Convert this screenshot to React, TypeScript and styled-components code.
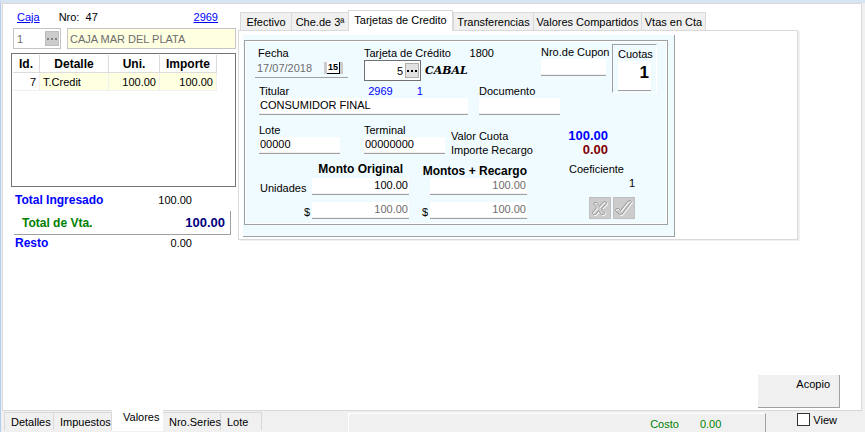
import React from "react";
import styled, { createGlobalStyle, css } from "styled-components";

const GlobalStyle = createGlobalStyle`
  *, *::before, *::after { box-sizing: border-box; }
  body {
    margin: 0;
    background: #f0f0f0;
    color: #000;
    font: 11px/14px "Liberation Sans", Arial, sans-serif;
  }
  button, input { font: inherit; color: inherit; margin: 0; border-radius: 0; }
`;

const line = "#d9d9d9";
const shade = "#a0a0a0";

const Shell = styled.div`
  min-height: 100vh;
  display: flex;
  flex-direction: column;
  background: #f0f0f0;
  border-top: 3px solid #d7e4f2;
  border-left: 1px solid #b4cdee;
`;

const Page = styled.main`
  flex: 1;
  display: flex;
  flex-direction: column;
  margin: 0 3px 0 1px;
  border: 1px solid ${line};
  background: #fff;
`;

const Columns = styled.div`
  display: grid;
  grid-template-columns: 225px minmax(0, 560px);
  column-gap: 2px;
  padding: 6px 8px 0;
`;

const Summary = styled.section`
  display: flex;
  flex-direction: column;
`;

const BoxHead = styled.div`
  display: flex;
  padding: 0 18px 0 6px;
  gap: 19px;
`;

const Link = styled.a<{ $end?: boolean }>`
  color: #00f;
  text-decoration: underline;
  margin-left: ${(p) => (p.$end ? "auto" : "0")};
`;

const BoxLine = styled.div`
  display: flex;
  gap: 6px;
  margin: 4px 0;
  padding-left: 2px;
`;

const CodeBox = styled.div<{ $strong?: boolean }>`
  display: flex;
  align-items: center;
  width: ${(p) => (p.$strong ? "57px" : "48px")};
  height: 21px;
  padding: 1px;
  border: 1px solid ${(p) => (p.$strong ? "#707070" : "#c4c4c4")};
  background: #fff;
  color: ${(p) => (p.$strong ? "#000" : "#6d6d6d")};
`;

const CodeInput = styled.input<{ $right?: boolean }>`
  flex: 1;
  min-width: 0;
  height: 17px;
  padding: 0 2px;
  border: 0;
  background: transparent;
  text-align: ${(p) => (p.$right ? "right" : "left")};
`;

const DotsButton = styled.button<{ $off?: boolean }>`
  display: flex;
  align-items: center;
  justify-content: center;
  width: 14px;
  height: 15px;
  padding: 0;
  border: 1px solid ${(p) => (p.$off ? "#bdbdbd" : "#adadad")};
  background: ${(p) => (p.$off ? "#cccccc" : "#e1e1e1")};
  color: ${(p) => (p.$off ? "#808080" : "#000")};
`;

const NameInput = styled.input`
  flex: 1;
  min-width: 0;
  height: 21px;
  padding: 0 2px;
  border: 1px solid #c4c4c4;
  background: #ffffe1;
  color: #6d6d6d;
`;

const GridBox = styled.div`
  height: 134px;
  padding: 1px;
  border: 1px solid #747474;
`;

const Table = styled.table`
  width: 204px;
  table-layout: fixed;
  border-collapse: separate;
  border-spacing: 0;
`;

const Th = styled.th<{ $w: number }>`
  width: ${(p) => p.$w}px;
  height: 18px;
  padding: 0;
  border-right: 1px solid #dcdcdc;
  border-bottom: 1px solid #dcdcdc;
  font: bold 12px/14px "Liberation Sans", Arial, sans-serif;
`;

const Td = styled.td<{ $plain?: boolean; $left?: boolean }>`
  height: 18px;
  padding: 0 3px;
  border-right: 1px solid #f0f0f0;
  border-bottom: 1px solid #f0f0f0;
  background: ${(p) => (p.$plain ? "#fff" : "#ffffe1")};
  text-align: ${(p) => (p.$left ? "left" : "right")};
`;

const Bold = styled.span<{ $color?: string; $size?: number }>`
  color: ${(p) => p.$color ?? "#000"};
  font: bold ${(p) => p.$size ?? 12}px/14px "Liberation Sans", Arial, sans-serif;
  white-space: nowrap;
`;

const TotalRow = styled.div<{ $panel?: boolean }>`
  display: flex;
  align-items: center;
  justify-content: space-between;
  ${(p) =>
    p.$panel
      ? css`
          height: 24px;
          margin: 0 5px 0 3px;
          padding: 0 5px 0 8px;
          border: solid ${shade};
          border-width: 0 1px 1px 0;
        `
      : css`
          height: 16px;
          padding: 0 44px 0 4px;
        `}
`;

const TotalGap = styled.div<{ $h: number }>`
  height: ${(p) => p.$h}px;
`;

const Tender = styled.section`
  min-width: 0;
`;

const TabList = styled.div`
  display: flex;
  align-items: flex-end;
  padding-left: 2px;
`;

const Tab = styled.button<{ $w: number; $active?: boolean }>`
  width: ${(p) => p.$w}px;
  height: ${(p) => (p.$active ? 21 : 18)}px;
  margin-bottom: ${(p) => (p.$active ? "-1px" : "0")};
  padding: ${(p) => (p.$active ? "0 0 2px" : "0")};
  border: 1px solid ${line};
  border-bottom: 0;
  border-right-width: ${(p) => (p.$active ? 1 : 0)}px;
  background: ${(p) => (p.$active ? "#fff" : "#f0f0f0")};
  white-space: nowrap;
  position: relative;
  &:last-child { border-right-width: 1px; }
`;

const TabPanel = styled.div`
  padding: 4px 4px 2px;
  border: 1px solid ${line};
  box-shadow: 2px 1px 0 #f0f0f0;
`;

const Card = styled.div`
  max-width: 432px;
  padding: 5px 6px 11px 1px;
  border: solid ${shade};
  border-width: 0 1px 1px 0;
  background: #f0fbff;
`;

const Form = styled.form`
  padding: 3px 10px 5px 10px;
  border: 1px solid ${shade};
  box-shadow: inset -1px -1px 0 #fff, inset 1px 1px 0 #fff;
`;

const TopGrid = styled.div`
  display: grid;
  grid-template-columns: 351px 45px;
  column-gap: 6px;
`;

const Row = styled.div<{ $indent?: number; $gap: number; $top?: number; $spread?: boolean }>`
  display: flex;
  align-items: flex-start;
  justify-content: ${(p) => (p.$spread ? "space-between" : "flex-start")};
  gap: ${(p) => p.$gap}px;
  padding-left: ${(p) => p.$indent ?? 0}px;
  margin-top: ${(p) => p.$top ?? 0}px;
`;

const Field = styled.div<{ $w: number; $top?: number }>`
  display: flex;
  flex-direction: column;
  flex: none;
  width: ${(p) => p.$w}px;
  padding-top: ${(p) => p.$top ?? 0}px;
`;

const Caption = styled.div`
  display: flex;
  justify-content: space-between;
  white-space: nowrap;
`;

const Label = styled.label`
  white-space: nowrap;
`;

const Input = styled.input<{ $right?: boolean; $muted?: boolean }>`
  width: 100%;
  height: 17px;
  padding: 0 1px 2px;
  border: 0;
  border-bottom: 1px solid ${shade};
  background: #fff;
  box-shadow: inset 0 -1px 0 #f0f0f0;
  color: ${(p) => (p.$muted ? "#6d6d6d" : "#000")};
  text-align: ${(p) => (p.$right ? "right" : "left")};
`;

const DateBox = styled.div`
  display: flex;
  align-items: center;
  height: 18px;
  padding: 0 5px 2px 0;
  border-bottom: 1px solid ${shade};
  color: #6d6d6d;
`;

const DateButton = styled.button`
  display: flex;
  justify-content: center;
  width: 19px;
  height: 12px;
  padding: 0;
  border: 0;
  background: #ccc;
`;

const Brand = styled.span`
  font: italic bold 11px/14px "DejaVu Serif", serif;
`;

const Ids = styled.span`
  display: flex;
  gap: 24px;
  margin-right: auto;
  margin-left: 79px;
  color: #00f;
`;

const Quotas = styled.div`
  grid-row: span 2;
  display: flex;
  flex-direction: column;
  width: 45px;
  height: 49px;
  padding: 2px 5px 1px;
  border: 1px solid #fff;
  border-top-color: ${shade};
  border-left-color: ${shade};
`;

const QuotaInput = styled.input`
  width: 33px;
  height: 30px;
  padding: 0 2px 5px;
  border: 0;
  border-bottom: 1px solid ${shade};
  background: #fff;
  font: bold 17px/20px "Liberation Sans", Arial, sans-serif;
  text-align: right;
`;

const FeeList = styled.dl`
  display: grid;
  grid-template-columns: 96px 61px;
  margin: 6px 0 0;
`;

const Fee = styled.dt`
  white-space: nowrap;
`;

const FeeValue = styled.dd`
  margin: 0;
  text-align: right;
`;

const Bottom = styled.div`
  display: grid;
  grid-template-columns: 53px 97px 21px 97px 108px;
  grid-template-rows: 16px 24px 17px;
  padding-left: 4px;
  margin-top: 5px;
`;

const Heading = styled.div<{ $wide?: boolean }>`
  grid-column: ${(p) => (p.$wide ? "span 2" : "2")};
  padding: ${(p) => (p.$wide ? "2px 0 0" : "0 6px 0 0")};
  text-align: right;
`;

const Side = styled.div`
  grid-column: 5;
  grid-row: 1 / span 3;
  display: flex;
  flex-direction: column;
  align-items: flex-end;
`;

const Coefficient = styled.span`
  padding-right: 11px;
`;

const Actions = styled.div`
  display: flex;
  gap: 2px;
  margin-top: 7px;
`;

const IconButton = styled.button`
  display: flex;
  align-items: center;
  justify-content: center;
  width: 22px;
  height: 22px;
  padding: 0;
  border: 1px solid #bfbfbf;
  background: #ccc;
`;

const RowLabel = styled.label<{ $end?: boolean }>`
  padding: 3px 2px 0 1px;
  text-align: ${(p) => (p.$end ? "right" : "left")};
`;

const Acopio = styled.button`
  align-self: flex-end;
  display: flex;
  justify-content: flex-end;
  width: 82px;
  height: 33px;
  margin: auto 21px 2px 0;
  padding: 2px 9px 0;
  border: solid ${shade};
  border-width: 0 1px 1px 0;
  background: #f0f0f0;
`;

const Footer = styled.footer`
  display: flex;
  height: 21px;
  padding: 0 28px 0 3px;
`;

const FooterTabs = styled.div`
  display: flex;
  flex: none;
  width: 344px;
`;

const FooterTab = styled.button<{ $w: number; $active?: boolean }>`
  width: ${(p) => p.$w}px;
  height: ${(p) => (p.$active ? 21 : 18)}px;
  margin-top: ${(p) => (p.$active ? "-1px" : "1px")};
  padding: ${(p) => (p.$active ? "0 2px 7px 11px" : "0 2px 0 6px")};
  border: solid ${line};
  border-width: ${(p) => (p.$active ? "0" : "1px 1px 0 0")};
  background: ${(p) => (p.$active ? "#fff" : "#f0f0f0")};
  text-align: left;
  white-space: nowrap;
  &:first-child { border-left-width: 1px; }
`;

const Status = styled.div`
  flex: 1;
  display: flex;
  justify-content: flex-end;
  gap: 21px;
  margin-top: 2px;
  padding: 3px 44px 0 0;
  border-top: 1px solid #fff;
  border-left: 1px solid #fff;
  border-right: 1px solid ${shade};
  color: #008000;
`;

const Check = styled.label`
  display: flex;
  gap: 3px;
  margin: 2px 0 0 31px;
`;

const CheckInput = styled.input`
  appearance: none;
  width: 13px;
  height: 13px;
  border: 1px solid #333;
  background: #fff;
  &:checked { background: #333; }
`;

const Dots = () => (
  <svg width="10" height="2" viewBox="0 0 10 2" fill="currentColor" aria-hidden="true">
    <rect x="0" width="2" height="2" />
    <rect x="4" width="2" height="2" />
    <rect x="8" width="2" height="2" />
  </svg>
);

const CalendarTile = styled.span`
  width: 13px;
  height: 12px;
  border: solid #000;
  border-width: 0 1px 1px 0;
  background: #fff;
  color: #000;
  font: bold 9px/11px "Liberation Sans", Arial, sans-serif;
  text-align: center;
`;

const crossPath = "M2 3l1-1h2l3 4 3-4 2-1 2 1v1l-5 5 3 4v1l-1 1h-2l-3-4-3 4H2l-1-1v-1l4-5-3-4z";
const tickPath = "M1 10l1-1h2l2 2 7-9 3-1 1 1-10 13H5l-4-4z";

const Cross = () => (
  <svg width="18" height="17" viewBox="0 0 18 17" fill="none" aria-hidden="true">
    <path d={crossPath} transform="translate(1.5 1.5)" stroke="#fff" />
    <path d={crossPath} transform="translate(.5 .5)" stroke="#999" />
  </svg>
);

const Tick = () => (
  <svg width="20" height="18" viewBox="0 0 20 18" fill="none" aria-hidden="true">
    <path d={tickPath} transform="translate(1.5 1.5)" stroke="#fff" />
    <path d={tickPath} transform="translate(.5 .5)" stroke="#999" />
  </svg>
);

const tenderTabs = [
  { text: "Efectivo", w: 51 },
  { text: "Che.de 3ª", w: 57 },
  { text: "Tarjetas de Credito", w: 105, active: true },
  { text: "Transferencias", w: 80 },
  { text: "Valores Compartidos", w: 108 },
  { text: "Vtas en Cta", w: 65 },
];

const pageTabs = [
  { text: "Detalles", w: 50 },
  { text: "Impuestos", w: 58 },
  { text: "Valores", w: 51, active: true },
  { text: "Nro.Series", w: 58 },
  { text: "Lote", w: 41 },
];

export default function App() {
  return (
    <>
      <GlobalStyle />
      <Shell>
        <Page>
          <Columns>
            <Summary>
              <BoxHead>
                <Link href="#caja">Caja</Link>
                <span>Nro:&nbsp; 47</span>
                <Link href="#2969" $end>2969</Link>
              </BoxHead>
              <BoxLine>
                <CodeBox>
                  <CodeInput aria-label="Caja" defaultValue="1" />
                  <DotsButton type="button" $off aria-label="Buscar caja"><Dots /></DotsButton>
                </CodeBox>
                <NameInput aria-label="Nombre de caja" defaultValue="CAJA MAR DEL PLATA" readOnly />
              </BoxLine>
              <GridBox>
                <Table>
                  <thead>
                    <tr>
                      <Th $w={27}>Id.</Th>
                      <Th $w={69}>Detalle</Th>
                      <Th $w={51}>Uni.</Th>
                      <Th $w={57}>Importe</Th>
                    </tr>
                  </thead>
                  <tbody>
                    <tr>
                      <Td $plain>7</Td>
                      <Td $left>T.Credit</Td>
                      <Td>100.00</Td>
                      <Td>100.00</Td>
                    </tr>
                  </tbody>
                </Table>
              </GridBox>
              <TotalGap $h={5} />
              <TotalRow>
                <Bold $color="#00f">Total Ingresado</Bold>
                <span>100.00</span>
              </TotalRow>
              <TotalGap $h={3} />
              <TotalRow $panel>
                <Bold $color="#008000">Total de Vta.</Bold>
                <Bold $color="#000080" $size={13}>100.00</Bold>
              </TotalRow>
              <TotalRow>
                <Bold $color="#00f">Resto</Bold>
                <span>0.00</span>
              </TotalRow>
            </Summary>

            <Tender>
              <TabList role="tablist">
                {tenderTabs.map((t) => (
                  <Tab key={t.text} type="button" role="tab" aria-selected={!!t.active} $w={t.w} $active={t.active}>
                    {t.text}
                  </Tab>
                ))}
              </TabList>
              <TabPanel role="tabpanel">
                <Card>
                  <Form>
                    <TopGrid>
                      <Row $gap={0} $spread>
                        <Row $gap={16}>
                          <Field $w={93} $top={2}>
                            <Caption><Label htmlFor="fecha">&nbsp;Fecha</Label></Caption>
                            <DateBox>
                              <CodeInput id="fecha" defaultValue="17/07/2018" />
                              <DateButton type="button" aria-label="Calendario">
                                <CalendarTile>15</CalendarTile>
                              </DateButton>
                            </DateBox>
                          </Field>
                          <Field $w={130} $top={2}>
                            <Caption>
                              <Label htmlFor="tarjeta">Tarjeta de Crédito</Label>
                              <span>1800</span>
                            </Caption>
                            <Row $gap={4}>
                              <CodeBox $strong>
                                <CodeInput id="tarjeta" $right defaultValue="5" />
                                <DotsButton type="button" aria-label="Buscar tarjeta"><Dots /></DotsButton>
                              </CodeBox>
                              <Row $gap={0} $top={4}><Brand>CABAL</Brand></Row>
                            </Row>
                          </Field>
                        </Row>
                        <Field $w={65} $top={1}>
                          <Label htmlFor="cupon">Nro.de Cupon</Label>
                          <Input id="cupon" />
                        </Field>
                      </Row>
                      <Quotas>
                        <Label htmlFor="cuotas">Cuotas</Label>
                        <QuotaInput id="cuotas" defaultValue="1" />
                      </Quotas>
                      <Row $gap={11} $indent={4} $top={3}>
                        <Field $w={209}>
                          <Caption>
                            <Label htmlFor="titular">Titular</Label>
                            <Ids><span>2969</span><span>1</span></Ids>
                          </Caption>
                          <Input id="titular" defaultValue="CONSUMIDOR FINAL" />
                        </Field>
                        <Field $w={81}>
                          <Label htmlFor="documento">Documento</Label>
                          <Input id="documento" />
                        </Field>
                      </Row>
                    </TopGrid>
                    <Row $gap={24} $indent={4} $top={8}>
                      <Field $w={81}>
                        <Label htmlFor="lote">Lote</Label>
                        <Input id="lote" defaultValue="00000" />
                      </Field>
                      <Row $gap={6}>
                        <Field $w={81}>
                          <Label htmlFor="terminal">Terminal</Label>
                          <Input id="terminal" defaultValue="00000000" />
                        </Field>
                        <FeeList>
                          <Fee>Valor Cuota</Fee>
                          <FeeValue><Bold $color="#00f" $size={13}>100.00</Bold></FeeValue>
                          <Fee>Importe Recargo</Fee>
                          <FeeValue><Bold $color="#800000" $size={13}>0.00</Bold></FeeValue>
                        </FeeList>
                      </Row>
                    </Row>
                    <Bottom>
                      <Heading><Bold>Monto Original</Bold></Heading>
                      <Heading $wide><Bold>Montos + Recargo</Bold></Heading>
                      <RowLabel htmlFor="unidades">Unidades</RowLabel>
                      <Input id="unidades" $right defaultValue="100.00" />
                      <span />
                      <Input aria-label="Unidades con recargo" $right $muted defaultValue="100.00" />
                      <RowLabel htmlFor="pesos" $end>$</RowLabel>
                      <Input id="pesos" $right $muted defaultValue="100.00" />
                      <RowLabel htmlFor="pesosRecargo" $end>$</RowLabel>
                      <Input id="pesosRecargo" $right $muted defaultValue="100.00" />
                      <Side>
                        <Coefficient>Coeficiente</Coefficient>
                        <span>1</span>
                        <Actions>
                          <IconButton type="button" aria-label="Cancelar"><Cross /></IconButton>
                          <IconButton type="button" aria-label="Aceptar"><Tick /></IconButton>
                        </Actions>
                      </Side>
                    </Bottom>
                  </Form>
                </Card>
              </TabPanel>
            </Tender>
          </Columns>
          <Acopio type="button">Acopio</Acopio>
        </Page>
        <Footer>
          <FooterTabs role="tablist">
            {pageTabs.map((t) => (
              <FooterTab key={t.text} type="button" role="tab" aria-selected={!!t.active} $w={t.w} $active={t.active}>
                {t.text}
              </FooterTab>
            ))}
          </FooterTabs>
          <Status>
            <span>Costo</span>
            <span>0.00</span>
          </Status>
          <Check>
            <CheckInput type="checkbox" />
            View
          </Check>
        </Footer>
      </Shell>
    </>
  );
}
